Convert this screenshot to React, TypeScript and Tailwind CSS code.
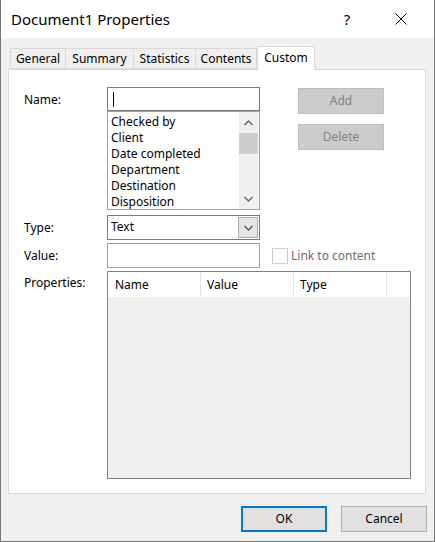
const font = { fontFamily: '"Noto Sans", "Open Sans", sans-serif' };

const Tab = ({ label, w, active }: { label: string; w: string; active?: boolean }) =>
  active ? (
    <div
      className={`relative z-10 -mb-px h-[24px] pt-[2px] bg-white border border-b-0 border-[#d9d9d9] text-[12px] text-black leading-[18px] text-center ${w}`}
    >
      {label}
    </div>
  ) : (
    <div
      className={`h-[21px] bg-[#f0f0f0] border border-[#d9d9d9] border-r-0 text-[12px] text-black leading-[20px] text-center last:border-r ${w}`}
    >
      {label}
    </div>
  );

const Chevron = ({ up, color = "#606060" }: { up?: boolean; color?: string }) => (
  <svg width="9" height="6" viewBox="0 0 9 6">
    <polyline
      points={up ? "0.5,5 4.5,1 8.5,5" : "0.5,1 4.5,5 8.5,1"}
      fill="none"
      stroke={color}
      strokeWidth="1.3"
    />
  </svg>
);

const Label = ({ children }: { children: React.ReactNode }) => (
  <div className="w-[83px] shrink-0 text-[12px] text-black">{children}</div>
);

export default function App() {
  const items = ["Checked by", "Client", "Date completed", "Department", "Destination", "Disposition"];
  return (
    <div
      className="w-[435px] h-[542px] flex flex-col bg-[#f0f0f0] border-x border-b border-[#767676] overflow-hidden"
      style={font}
    >
      {/* title bar */}
      <div className="h-[38px] shrink-0 bg-white flex items-center">
        <div className="pl-[10px] text-[15px] text-black">Document1 Properties</div>
        <div className="ml-auto w-[46px] text-center text-[15px] text-black mr-[8px]">?</div>
        <div className="w-[46px] h-[38px] flex items-center justify-center mr-[10px]">
          <svg width="12" height="12" viewBox="0 0 12 12">
            <path d="M0.5 0.5 L11.5 11.5 M11.5 0.5 L0.5 11.5" stroke="#000" strokeWidth="1" />
          </svg>
        </div>
      </div>

      {/* tabs */}
      <div className="pl-[7px] pt-[8px]">
        <div className="flex items-end pl-[2px] h-[23px]">
          <div className="flex">
            <Tab label="General" w="w-[55px]" />
            <Tab label="Summary" w="w-[68px]" />
            <Tab label="Statistics" w="w-[62px]" />
            <Tab label="Contents" w="w-[62px]" />
          </div>
          <Tab label="Custom" w="w-[58px]" active />
        </div>

        {/* panel */}
        <div className="w-[418px] h-[425px] bg-white border border-[#d9d9d9] pl-[15px] pt-[17px]">
          {/* name row */}
          <div className="flex">
            <Label>
              <div className="pt-[4px]">Name:</div>
            </Label>
            <div className="w-[153px]">
              <div className="h-[24px] border border-[#7a7a7a] bg-white flex items-center pl-[5px]">
                <span className="w-px h-[15px] bg-black" />
              </div>
              <div className="h-[99px] border border-[#a0a0a0] bg-white flex">
                <div className="flex-1 pl-[3px] pt-[2px] text-[12px] text-black leading-[16px]">
                  {items.map((i) => (
                    <div key={i}>{i}</div>
                  ))}
                </div>
                <div className="w-[19px] mr-px bg-[#f0f0f0] flex flex-col items-center">
                  <div className="h-[21px] flex items-center justify-center">
                    <Chevron up />
                  </div>
                  <div className="w-[19px] h-[21px] bg-[#cdcdcd]" />
                  <div className="flex-1" />
                  <div className="h-[21px] flex items-center justify-center">
                    <Chevron />
                  </div>
                </div>
              </div>
            </div>
            <div className="ml-[38px] pt-px flex flex-col gap-[10px]">
              <div className="w-[86px] h-[26px] bg-[#cccccc] border border-[#bfbfbf] text-[12px] text-[#838383] flex items-center justify-center">
                Add
              </div>
              <div className="w-[86px] h-[26px] bg-[#cccccc] border border-[#bfbfbf] text-[12px] text-[#838383] flex items-center justify-center">
                Delete
              </div>
            </div>
          </div>

          {/* type row */}
          <div className="flex items-center mt-[5px]">
            <Label>Type:</Label>
            <div className="w-[153px] h-[25px] border border-[#7a7a7a] bg-white flex items-center">
              <div className="flex-1 pl-[3px] pb-px text-[12px] text-black">Text</div>
              <div className="w-[20px] h-[21px] mr-px bg-[#e5e5e5] border border-[#adadad] flex items-center justify-center">
                <Chevron color="#555" />
              </div>
            </div>
          </div>

          {/* value row */}
          <div className="flex items-center mt-[3px]">
            <Label>Value:</Label>
            <div className="w-[153px] h-[25px] border border-[#a0a0a0] bg-white" />
            <div className="ml-[12px] w-[16px] h-[16px] border border-[#cccccc] bg-white" />
            <div className="ml-[3px] text-[12px] text-[#6d6d6d]">Link to content</div>
          </div>

          {/* properties row */}
          <div className="flex mt-[3px]">
            <Label>
              <div className="pt-[3px]">Properties:</div>
            </Label>
            <div className="w-[304px] h-[208px] border border-[#828282] bg-[#f0f0f0] flex flex-col">
              <div className="h-[25px] bg-white flex text-[12px] text-black">
                <div className="w-[93px] pl-[7px] flex items-center border-r border-[#e5e5e5]">Name</div>
                <div className="w-[93px] pl-[6px] flex items-center border-r border-[#e5e5e5]">Value</div>
                <div className="w-[93px] pl-[6px] flex items-center border-r border-[#e5e5e5]">Type</div>
              </div>
            </div>
          </div>
        </div>
      </div>

      {/* footer */}
      <div className="flex justify-end gap-[14px] pr-[7px] mt-[12px]">
        <div className="w-[86px] h-[26px] bg-[#e1e1e1] border-2 border-[#0078d7] text-[12px] text-black flex items-center justify-center">
          OK
        </div>
        <div className="w-[86px] h-[26px] bg-[#e1e1e1] border border-[#adadad] text-[12px] text-black flex items-center justify-center">
          Cancel
        </div>
      </div>
    </div>
  );
}
